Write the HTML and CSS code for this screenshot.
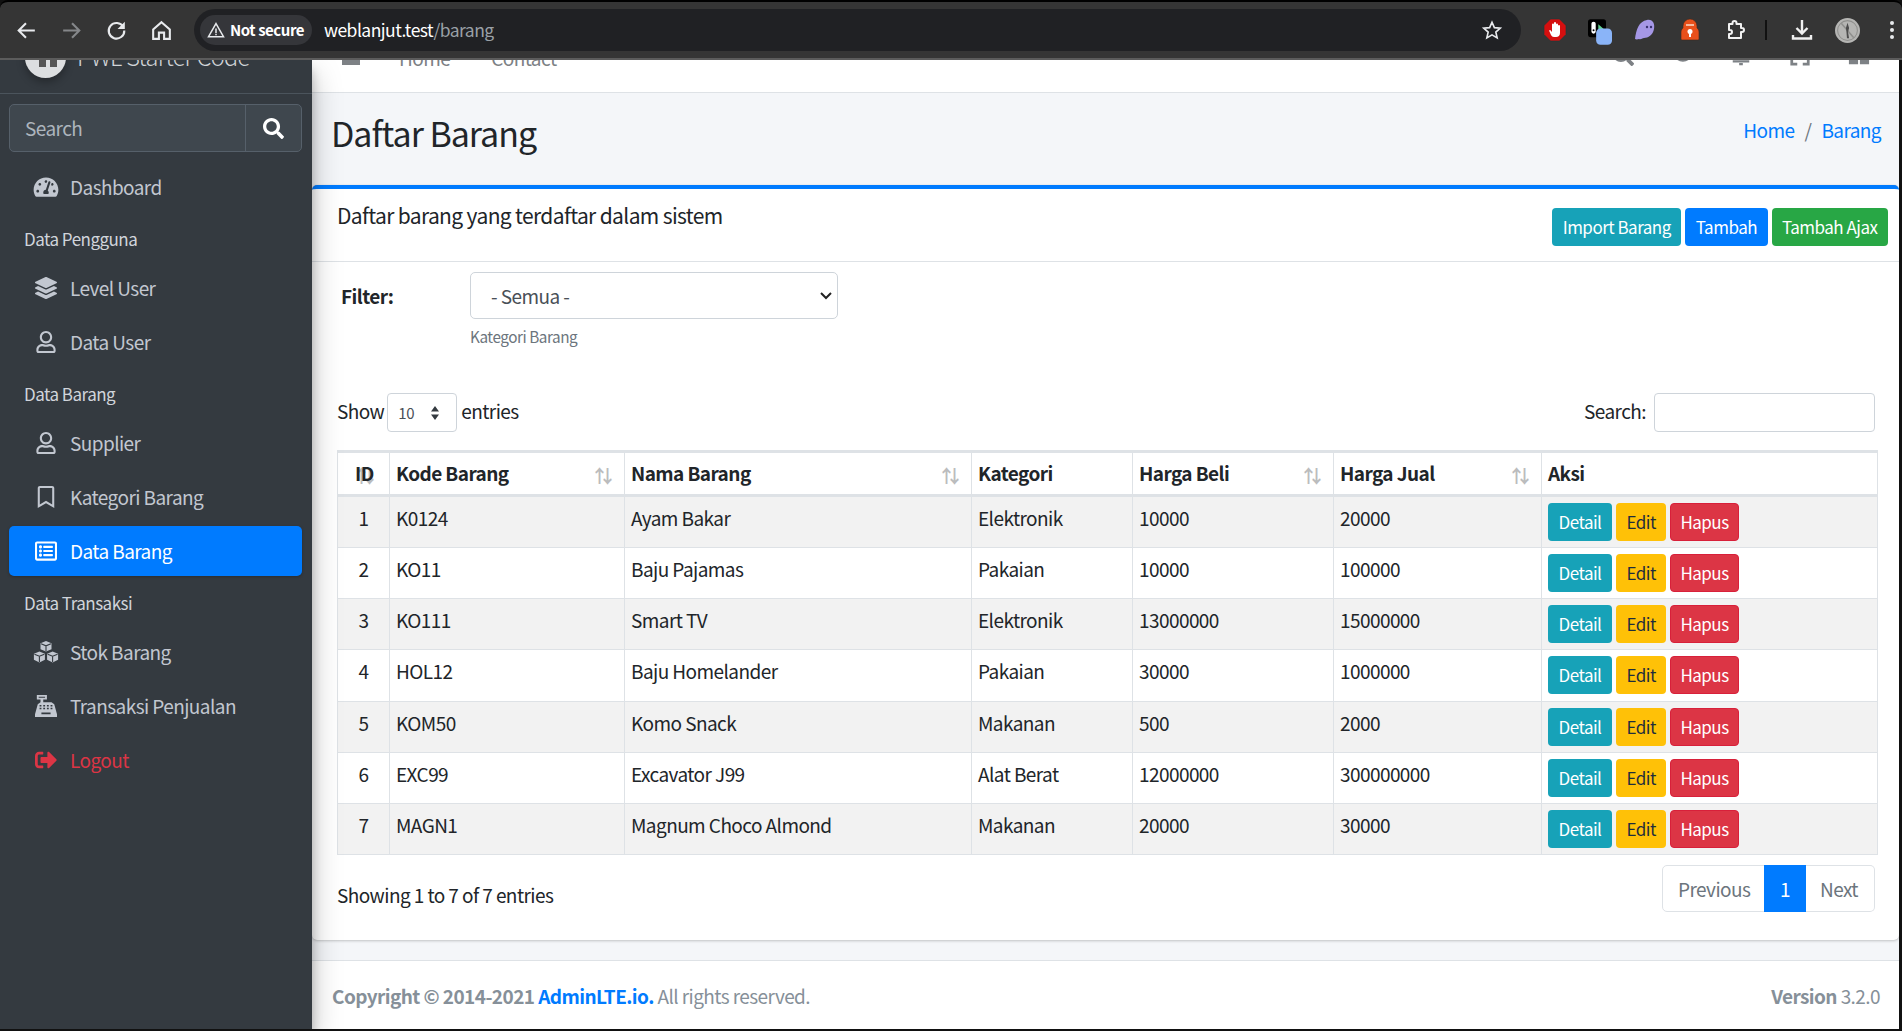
FILE: index.html
```html
<!DOCTYPE html>
<html lang="id">

<head>
    <meta charset="UTF-8">
    <title>Daftar Barang</title>
    <link rel="stylesheet" href="styles.css">
</head>

<body>
    <svg class="defs" width="0" height="0">
        <symbol id="i-user" viewBox="0 0 448 512"><path d="M313.6 304c-28.7 0-42.5 16-89.6 16-47.1 0-60.8-16-89.6-16C60.2 304 0 364.2 0 438.4V464c0 26.5 21.5 48 48 48h352c26.5 0 48-21.5 48-48v-25.6c0-74.2-60.2-134.4-134.4-134.4zM400 464H48v-25.6c0-47.6 38.8-86.4 86.4-86.4 14.6 0 38.3 16 89.6 16 51.7 0 74.9-16 89.6-16 47.6 0 86.4 38.8 86.4 86.4V464zM224 288c79.5 0 144-64.5 144-144S303.5 0 224 0 80 64.5 80 144s64.5 144 144 144zm0-240c52.9 0 96 43.1 96 96s-43.1 96-96 96-96-43.1-96-96 43.1-96 96-96z"/></symbol>
        <symbol id="i-search" viewBox="0 0 512 512"><path d="M505 442.7L405.3 343c-4.5-4.5-10.6-7-17-7H372c27.6-35.3 44-79.7 44-128C416 93.1 322.9 0 208 0S0 93.1 0 208s93.1 208 208 208c48.3 0 92.7-16.4 128-44v16.3c0 6.4 2.5 12.5 7 17l99.7 99.7c9.4 9.4 24.6 9.4 33.9 0l28.3-28.3c9.4-9.4 9.4-24.6.1-34zM208 336c-70.7 0-128-57.2-128-128 0-70.7 57.2-128 128-128 70.7 0 128 57.2 128 128 0 70.7-57.2 128-128 128z"/></symbol>
    </svg>

    <div class="window">
        <!-- browser toolbar -->
        <header class="chrome">
            <div class="chrome-nav">
                <svg class="cicon" viewBox="0 0 24 24"><path d="M20 12H5M11.5 5l-7 7 7 7" fill="none" stroke="#e8eaed" stroke-width="2"/></svg>
                <svg class="cicon" viewBox="0 0 24 24"><path d="M4 12h15M12.5 5l7 7-7 7" fill="none" stroke="#85878a" stroke-width="2"/></svg>
                <svg class="cicon" viewBox="0 0 24 24"><path d="M18.5 8.5A7.5 7.5 0 1 0 19.5 12" fill="none" stroke="#e8eaed" stroke-width="2"/><path d="M20 3.5v7h-7z" fill="#e8eaed"/></svg>
                <svg class="cicon" viewBox="0 0 24 24"><path d="M12 4l8 7v9h-5.500v-6h-5v6H4v-9z" fill="none" stroke="#e8eaed" stroke-width="2"/></svg>
            </div>
            <div class="omnibox">
                <div class="chip">
                    <svg class="chip-icon" viewBox="0 0 24 24"><path d="M12 3.500L22 21H2z" fill="none" stroke="#e8eaed" stroke-width="2"/><path d="M11 10h2v6h-2zM11 17h2v2h-2z" fill="#e8eaed"/></svg>
                    <span>Not secure</span>
                </div>
                <div class="url">weblanjut.test<span class="url-path">/barang</span></div>
                <svg class="star" viewBox="0 0 24 24"><path d="M12 3.500l2.600 5.900 6.400.6-4.800 4.300 1.400 6.300-5.600-3.300-5.600 3.300 1.400-6.300L3 10l6.400-.6z" fill="none" stroke="#e8eaed" stroke-width="1.800"/></svg>
            </div>
            <div class="chrome-ext">
                <svg class="ext" viewBox="0 0 24 24"><path d="M7.500 1h9L23 7.500v9L16.500 23h-9L1 16.500v-9z" fill="#d50f0f" stroke="#143c3c" stroke-width=".6"/><path d="M8 17l-2-4.500 1.200-.6L9 14V6.500a1 1 0 0 1 2 0V5a1 1 0 0 1 2 0v1.500a1 1 0 0 1 2 0V8a1 1 0 0 1 2 0v7c0 2.500-1.500 4-4 4h-2c-1.500 0-2.300-.7-3-2z" fill="#fff"/></svg>
                <svg class="ext ext-tall" viewBox="0 0 28 30"><rect width="21" height="21" rx="3" fill="#000"/><rect x="4" y="3" width="5" height="14" rx="2.500" fill="#fff"/><circle cx="6.500" cy="13" r="1.200" fill="#000"/><path d="M12 6l7 6h-7z" fill="#5fd38d"/><rect x="9.500" y="11" width="18.500" height="19" rx="5" fill="#8ab4f8"/></svg>
                <svg class="ext" viewBox="0 0 24 24"><path d="M2 21c1-9 4-18 12-19 6-1 8 4 7 9-1 6-6 9-10 9-2 0-3 2-5 1-1 0-2 1-4 0z" fill="#a597e6"/><circle cx="14" cy="9" r="1.200" fill="#3a3170"/><circle cx="18" cy="9" r="1.200" fill="#3a3170"/></svg>
                <svg class="ext" viewBox="0 0 24 24"><path d="M3 21v-7c0-2 1-3 2-4V8a7 7 0 0 1 14 0v2c1 1 2 2 2 4v7a1 1 0 0 1-1 1H4a1 1 0 0 1-1-1z" fill="#e8501b" stroke="#3c2a20" stroke-width=".6"/><path d="M8 6h8v2H8z" fill="#f4b9a0"/><circle cx="12" cy="13.500" r="2.500" fill="#fff"/><path d="M11 14h2v5h-2z" fill="#fff"/></svg>
                <svg class="ext" viewBox="0 0 24 24"><path d="M6 6h3.500V5a2 2 0 0 1 4 0v1H18v4h1a2 2 0 0 1 0 4h-1v6H6v-4h1a2 2 0 0 0 0-4H6z" fill="none" stroke="#f1f1f1" stroke-width="2" stroke-linejoin="round"/></svg>
                <span class="sep"></span>
                <svg class="ext" viewBox="0 0 24 24"><path d="M12 2v13M6.500 10l5.500 5.500 5.500-5.500" fill="none" stroke="#f1f1f1" stroke-width="2.400"/><path d="M3 17v3.500h18V17" fill="none" stroke="#f1f1f1" stroke-width="2.400"/></svg>
                <svg class="avatar" viewBox="0 0 24 24"><circle cx="12" cy="12" r="12" fill="#b5b5b3"/><circle cx="12" cy="12" r="9.500" fill="none" stroke="#8f8f8d"/><path d="M6 5l12 14" stroke="#8f8f8d" stroke-width="1.500"/><path d="M12 4.500l1.500 5-1 4 1 6h-2l-.5-6-.5-4z" fill="#4c4c4c"/></svg>
                <span class="dots"><i></i><i></i><i></i></span>
            </div>
        </header>

        <div class="app">
            <aside class="sidebar">
                <div class="brand">
                    <span class="brand-logo"></span>
                    <span class="brand-text">PWL Starter Code</span>
                </div>
                <div class="side-search">
                    <span class="side-search-input">Search</span>
                    <span class="side-search-btn"><svg class="icon-search"><use href="#i-search"/></svg></span>
                </div>
                <nav class="menu">
                    <a class="item">
                        <svg class="mi" viewBox="0 0 576 512"><path d="M288 32C128.940 32 0 160.940 0 320c0 52.800 14.250 102.260 39.060 144.800 5.610 9.620 16.300 15.200 27.440 15.200h443c11.140 0 21.830-5.580 27.440-15.200C561.750 422.260 576 372.800 576 320c0-159.060-128.940-288-288-288zm0 64c14.710 0 26.580 10.130 30.320 23.650-1.110 2.260-2.640 4.230-3.450 6.670l-9.220 27.670c-5.130 3.490-10.970 6.010-17.640 6.010-17.670 0-32-14.330-32-32S270.330 96 288 96zM96 384c-17.670 0-32-14.330-32-32s14.330-32 32-32 32 14.330 32 32-14.330 32-32 32zm48-160c-17.670 0-32-14.330-32-32s14.330-32 32-32 32 14.330 32 32-14.330 32-32 32zm246.770-72.410l-61.330 184C343.130 347.330 352 364.540 352 384c0 11.720-3.380 22.550-8.880 32H232.880c-5.500-9.450-8.880-20.280-8.880-32 0-33.940 26.500-61.430 59.900-63.590l61.340-184.010c4.170-12.560 17.730-19.450 30.360-15.170 12.570 4.190 19.350 17.790 15.170 30.360zm14.660 57.200l15.520-46.550c3.470-1.290 7.130-2.230 11.050-2.230 17.670 0 32 14.330 32 32s-14.330 32-32 32c-11.380-.01-20.890-6.280-26.570-15.220zM480 384c-17.670 0-32-14.330-32-32s14.330-32 32-32 32 14.330 32 32-14.330 32-32 32z"/></svg>
                        Dashboard
                    </a>
                    <div class="menu-head">Data Pengguna</div>
                    <a class="item">
                        <svg class="mi" viewBox="0 0 512 512"><path d="M12.410 148.020l232.940 105.670c6.800 3.090 14.490 3.090 21.290 0l232.940-105.670c16.550-7.510 16.550-32.520 0-40.030L266.650 2.310a25.607 25.607 0 0 0-21.290 0L12.410 107.980c-16.550 7.510-16.550 32.530 0 40.040zm487.180 88.280l-58.090-26.330-161.640 73.270c-7.560 3.430-15.590 5.170-23.860 5.170s-16.290-1.740-23.860-5.170L70.510 209.970l-58.100 26.330c-16.550 7.500-16.550 32.500 0 40l232.940 105.590c6.800 3.080 14.490 3.080 21.290 0L499.590 276.300c16.550-7.500 16.550-32.500 0-40zm0 127.800l-57.870-26.230-161.860 73.370c-7.560 3.430-15.590 5.170-23.860 5.170s-16.290-1.740-23.860-5.170L70.290 337.870 12.410 364.100c-16.550 7.500-16.550 32.500 0 40l232.940 105.590c6.800 3.080 14.490 3.080 21.290 0L499.590 404.100c16.550-7.500 16.550-32.500 0-40z"/></svg>
                        Level User
                    </a>
                    <a class="item"><svg class="mi"><use href="#i-user"/></svg>Data User</a>
                    <div class="menu-head">Data Barang</div>
                    <a class="item"><svg class="mi"><use href="#i-user"/></svg>Supplier</a>
                    <a class="item">
                        <svg class="mi" viewBox="0 0 384 512"><path d="M336 0H48C21.490 0 0 21.490 0 48v464l192-112 192 112V48c0-26.510-21.490-48-48-48zm0 428.430l-144-84-144 84V54a6 6 0 0 1 6-6h276c3.314 0 6 2.683 6 5.996V428.430z"/></svg>
                        Kategori Barang
                    </a>
                    <a class="item active">
                        <svg class="mi" viewBox="0 0 512 512"><path d="M464 32H48C21.490 32 0 53.490 0 80v352c0 26.510 21.490 48 48 48h416c26.510 0 48-21.490 48-48V80c0-26.510-21.490-48-48-48zm-6 400H54a6 6 0 0 1-6-6V86a6 6 0 0 1 6-6h404a6 6 0 0 1 6 6v340a6 6 0 0 1-6 6zm-42-92v24c0 6.627-5.373 12-12 12H204c-6.627 0-12-5.373-12-12v-24c0-6.627 5.373-12 12-12h200c6.627 0 12 5.373 12 12zm0-96v24c0 6.627-5.373 12-12 12H204c-6.627 0-12-5.373-12-12v-24c0-6.627 5.373-12 12-12h200c6.627 0 12 5.373 12 12zm0-96v24c0 6.627-5.373 12-12 12H204c-6.627 0-12-5.373-12-12v-24c0-6.627 5.373-12 12-12h200c6.627 0 12 5.373 12 12zm-252 12c0 19.882-16.118 36-36 36s-36-16.118-36-36 16.118-36 36-36 36 16.118 36 36zm0 96c0 19.882-16.118 36-36 36s-36-16.118-36-36 16.118-36 36-36 36 16.118 36 36zm0 96c0 19.882-16.118 36-36 36s-36-16.118-36-36 16.118-36 36-36 36 16.118 36 36z"/></svg>
                        Data Barang
                    </a>
                    <div class="menu-head">Data Transaksi</div>
                    <a class="item">
                        <svg class="mi" viewBox="1 0 22 20"><path d="M12 0l5 2v5.500l-5 2-5-2V2zM6 9.500l5 2V17l-5 2.500L1 17v-5.500zM18 9.500l5 2V17l-5 2.500-5-2.500v-5.500z"/><path d="M7.500 2.600L12 4.400l4.500-1.800M1.500 12l4.500 1.800 4.500-1.800M13.500 12l4.500 1.800 4.500-1.800M12 4.400v4.800M6 13.800v5.400M18 13.800v5.400" fill="none" stroke="#343a40" stroke-width="1"/></svg>
                        Stok Barang
                    </a>
                    <a class="item">
                        <svg class="mi" viewBox="0 0 24 24"><path d="M2 0h11v5H9v3h9l3 2 3 11v3H0v-3l3-11 3-2V5H2z"/><path d="M4 2h7v1H4zM5 11h2v1.500H5zM9 11h2v1.500H9zM13 11h2v1.500h-2zM17 11h2v1.500h-2zM5 14h2v1.500H5zM9 14h2v1.500H9zM13 14h2v1.500h-2zM17 14h2v1.500h-2zM7 19h10v2H7z" fill="#343a40"/></svg>
                        Transaksi Penjualan
                    </a>
                    <a class="item logout">
                        <svg class="mi" viewBox="0 0 512 512"><path d="M497 273L329 441c-15 15-41 4.500-41-17v-96H152c-13.300 0-24-10.700-24-24v-96c0-13.300 10.700-24 24-24h136V88c0-21.400 25.900-32 41-17l168 168c9.300 9.400 9.300 24.600 0 34zM192 436v-40c0-6.600-5.400-12-12-12H96c-17.700 0-32-14.300-32-32V160c0-17.700 14.300-32 32-32h84c6.600 0 12-5.400 12-12V76c0-6.600-5.400-12-12-12H96c-53 0-96 43-96 96v192c0 53 43 96 96 96h84c6.600 0 12-5.400 12-12z"/></svg>
                        Logout
                    </a>
                </nav>
            </aside>

            <div class="main">
                <div class="navbar">
                    <div class="nav-left">
                        <span class="burger"></span>
                        <span class="nav-link">Home</span>
                        <span class="nav-link">Contact</span>
                    </div>
                    <div class="nav-right">
                        <svg class="nav-icon"><use href="#i-search"/></svg>
                        <svg class="nav-icon" viewBox="0 0 24 24"><ellipse cx="13" cy="10" rx="9" ry="8" fill="none" stroke="#7d8185" stroke-width="2.500"/></svg>
                        <svg class="nav-icon" viewBox="0 0 24 24"><path d="M3 19h18M10 22h4" stroke="#7d8185" stroke-width="2.500"/></svg>
                        <svg class="nav-icon" viewBox="0 0 24 24"><path d="M3 16v6h6M21 16v6h-6" fill="none" stroke="#7d8185" stroke-width="3"/></svg>
                        <svg class="nav-icon" viewBox="0 0 24 24"><path d="M1 12h10v10H1zM13 12h10v10H13z" fill="#7d8185"/></svg>
                    </div>
                </div>

                <section class="content-header">
                    <h1>Daftar Barang</h1>
                    <div class="crumbs"><a>Home</a><span class="crumb-sep">/</span><a>Barang</a></div>
                </section>

                <section class="card">
                    <div class="card-header">
                        <h3>Daftar barang yang terdaftar dalam sistem</h3>
                        <div class="card-tools">
                            <a class="btn btn-info">Import Barang</a>
                            <a class="btn btn-primary">Tambah</a>
                            <a class="btn btn-success">Tambah Ajax</a>
                        </div>
                    </div>
                    <div class="card-body">
                        <div class="filter">
                            <label class="filter-label">Filter:</label>
                            <div class="filter-field">
                                <select class="filter-select">
                                    <option>- Semua -</option>
                                </select>
                                <small>Kategori Barang</small>
                            </div>
                        </div>

                        <div class="dt-top">
                            <div class="dt-length">
                                Show
                                <select class="length-select"><option>10</option></select>
                                entries
                            </div>
                            <div class="dt-search">
                                Search:
                                <input class="search-input" type="search">
                            </div>
                        </div>

                        <table class="data">
                            <colgroup>
                                <col class="c-id"><col class="c-kode"><col class="c-nama"><col class="c-kat"><col class="c-beli"><col class="c-jual"><col class="c-aksi">
                            </colgroup>
                            <thead>
                                <tr>
                                    <th class="sort th-id">ID</th>
                                    <th class="sort">Kode Barang</th>
                                    <th class="sort">Nama Barang</th>
                                    <th>Kategori</th>
                                    <th class="sort">Harga Beli</th>
                                    <th class="sort">Harga Jual</th>
                                    <th>Aksi</th>
                                </tr>
                            </thead>
                            <tbody>
                                <tr>
                                    <td class="center">1</td><td>K0124</td><td>Ayam Bakar</td><td>Elektronik</td><td>10000</td><td>20000</td>
                                    <td><div class="acts"><a class="btn btn-info">Detail</a><a class="btn btn-warning">Edit</a><a class="btn btn-danger">Hapus</a></div></td>
                                </tr>
                                <tr>
                                    <td class="center">2</td><td>KO11</td><td>Baju Pajamas</td><td>Pakaian</td><td>10000</td><td>100000</td>
                                    <td><div class="acts"><a class="btn btn-info">Detail</a><a class="btn btn-warning">Edit</a><a class="btn btn-danger">Hapus</a></div></td>
                                </tr>
                                <tr>
                                    <td class="center">3</td><td>KO111</td><td>Smart TV</td><td>Elektronik</td><td>13000000</td><td>15000000</td>
                                    <td><div class="acts"><a class="btn btn-info">Detail</a><a class="btn btn-warning">Edit</a><a class="btn btn-danger">Hapus</a></div></td>
                                </tr>
                                <tr>
                                    <td class="center">4</td><td>HOL12</td><td>Baju Homelander</td><td>Pakaian</td><td>30000</td><td>1000000</td>
                                    <td><div class="acts"><a class="btn btn-info">Detail</a><a class="btn btn-warning">Edit</a><a class="btn btn-danger">Hapus</a></div></td>
                                </tr>
                                <tr>
                                    <td class="center">5</td><td>KOM50</td><td>Komo Snack</td><td>Makanan</td><td>500</td><td>2000</td>
                                    <td><div class="acts"><a class="btn btn-info">Detail</a><a class="btn btn-warning">Edit</a><a class="btn btn-danger">Hapus</a></div></td>
                                </tr>
                                <tr>
                                    <td class="center">6</td><td>EXC99</td><td>Excavator J99</td><td>Alat Berat</td><td>12000000</td><td>300000000</td>
                                    <td><div class="acts"><a class="btn btn-info">Detail</a><a class="btn btn-warning">Edit</a><a class="btn btn-danger">Hapus</a></div></td>
                                </tr>
                                <tr>
                                    <td class="center">7</td><td>MAGN1</td><td>Magnum Choco Almond</td><td>Makanan</td><td>20000</td><td>30000</td>
                                    <td><div class="acts"><a class="btn btn-info">Detail</a><a class="btn btn-warning">Edit</a><a class="btn btn-danger">Hapus</a></div></td>
                                </tr>
                            </tbody>
                        </table>

                        <div class="dt-bottom">
                            <div class="dt-info">Showing 1 to 7 of 7 entries</div>
                            <div class="pager">
                                <a class="page-prev">Previous</a>
                                <a class="page-cur">1</a>
                                <a class="page-next">Next</a>
                            </div>
                        </div>
                    </div>
                </section>

                <div class="spacer"></div>

                <footer class="footer">
                    <div><strong>Copyright © 2014-2021 <a>AdminLTE.io.</a></strong> All rights reserved.</div>
                    <div><strong>Version</strong> 3.2.0</div>
                </footer>
            </div>
        </div>
    </div>
</body>

</html>
```

FILE: styles.css
```css
* {
    box-sizing: border-box;
    letter-spacing: -0.03em;
}

html,
body {
    margin: 0;
    height: 100%;
    overflow: hidden;
}

body {
    font-family: "Noto Sans CJK JP", "Noto Sans", sans-serif;
    font-size: 19px;
    line-height: 30px;
    color: #212529;
    background: #111;
}

.defs {
    display: block;
    height: 0;
}

.window {
    display: flex;
    flex-direction: column;
    height: 1031px;
    padding-bottom: 2px;
}

/* browser toolbar */
.chrome {
    display: flex;
    align-items: center;
    flex: none;
    height: 60px;
    border-top: 2px solid #000;
    border-bottom: 2px solid #5c5c5c;
    border-radius: 8px 8px 0 0;
    background: #353535;
}

.chrome-nav {
    display: flex;
    align-items: center;
    gap: 20px;
    width: 194px;
    padding-left: 14px;
}

.cicon {
    width: 25px;
    height: 25px;
}

.omnibox {
    display: flex;
    align-items: center;
    width: 1327px;
    height: 42px;
    padding: 0 18px 0 6px;
    border-radius: 21px;
    background: #202124;
}

.chip {
    display: flex;
    align-items: center;
    gap: 5px;
    width: 112px;
    height: 30px;
    padding-left: 7px;
    border-radius: 15px;
    background: #35363a;
    color: #fff;
    font-size: 15px;
    font-weight: 700;
    white-space: nowrap;
}

.chip-icon {
    flex: none;
    width: 18px;
    height: 18px;
}

.url {
    flex: 1;
    margin-left: 12px;
    color: #fff;
    font-size: 17.5px;
}

.url-path {
    color: #9aa0a6;
}

.star {
    width: 22px;
    height: 22px;
}

.chrome-ext {
    display: flex;
    align-items: center;
    flex: 1;
    gap: 21px;
    padding-left: 22px;
}

.ext {
    flex: none;
    width: 24px;
    height: 24px;
}

.ext-tall {
    height: 28px;
    margin-top: 4px;
}

.sep {
    flex: none;
    width: 2px;
    height: 20px;
    margin: 0 2px 0 -3px;
    background: #111;
}

.avatar {
    flex: none;
    width: 25px;
    height: 25px;
}

.dots {
    display: flex;
    flex-direction: column;
    gap: 3px;
    margin-left: 9px;
}

.dots i {
    display: block;
    width: 4px;
    height: 4px;
    border-radius: 50%;
    background: #e8eaed;
}

/* page */
.app {
    display: flex;
    flex: 1;
    min-height: 0;
    margin-right: 3px;
    overflow: hidden;
}

.sidebar {
    position: relative;
    z-index: 2;
    flex: none;
    width: 312px;
    background: #343a40;
    box-shadow: 0 14px 28px rgba(0, 0, 0, .25), 0 10px 10px rgba(0, 0, 0, .22);
}

.brand {
    display: flex;
    align-items: flex-end;
    gap: 11px;
    height: 34px;
    padding-left: 25px;
    border-bottom: 1px solid #4b545c;
    overflow: hidden;
}

.brand-logo {
    position: relative;
    flex: none;
    width: 41px;
    height: 41px;
    margin-bottom: 15px;
    border-radius: 50%;
    background: #dcdee0;
    box-shadow: 0 4px 8px rgba(0, 0, 0, .3);
}

/* the two dark bars of the logo, mostly hidden under the toolbar */
.brand-logo::before {
    position: absolute;
    bottom: 11px;
    left: 14px;
    width: 7px;
    height: 14px;
    background: #555;
    box-shadow: 11px 0 0 #555;
    content: "";
}

.brand-text {
    margin-bottom: 22px;
    color: #d0d3d7;
    font-size: 23.5px;
    font-weight: 300;
    white-space: nowrap;
}

.side-search {
    display: flex;
    height: 48px;
    margin: 10px 10px 0 9px;
    border: 1px solid #56606a;
    border-radius: 5px;
    background: #3f474e;
}

.side-search-input {
    flex: 1;
    padding: 8px 0 0 15px;
    color: #adb5bd;
}

.side-search-btn {
    display: flex;
    align-items: center;
    justify-content: center;
    width: 56px;
    border-left: 1px solid #56606a;
}

.icon-search {
    width: 21px;
    height: 21px;
    fill: #fff;
}

.menu {
    display: flex;
    flex-direction: column;
    gap: 4px;
    margin: 10px 10px 0 9px;
}

.item {
    display: flex;
    align-items: center;
    height: 50px;
    padding: 0 0 1px 61px;
    position: relative;
    border-radius: 5px;
    color: #c2c7d0;
    white-space: nowrap;
}

.item .mi {
    position: absolute;
    top: 14px;
    left: 24px;
    width: 26px;
    height: 22px;
    fill: #c2c7d0;
}

.item.active {
    background: #007bff;
    color: #fff;
    box-shadow: 0 1px 3px rgba(0, 0, 0, .24);
}

.item.active .mi {
    fill: #fff;
}

.item.logout {
    color: #dc3545;
}

.item.logout .mi {
    fill: #dc3545;
}

.menu-head {
    height: 43px;
    padding: 10px 0 0 15px;
    color: #d0d4db;
    font-size: 17px;
    line-height: 26px;
}

.main {
    display: flex;
    flex: 1;
    flex-direction: column;
    min-width: 0;
    background: #f4f6f9;
}

.navbar {
    display: flex;
    align-items: flex-end;
    justify-content: space-between;
    flex: none;
    height: 33px;
    border-bottom: 1px solid #dee2e6;
    background: #fff;
    overflow: hidden;
}

.nav-left {
    display: flex;
    align-items: flex-end;
    margin-bottom: 19px;
    color: #7d8185;
}

.burger {
    width: 18px;
    height: 5px;
    margin: 0 0 8px 30px;
    background: #7d8185;
}

.nav-link {
    margin-left: 41px;
    line-height: 30px;
}

.burger + .nav-link {
    margin-left: 39px;
}

.nav-right {
    display: flex;
    gap: 37px;
    margin: 0 29px 26px 0;
}

.nav-icon {
    width: 22px;
    height: 22px;
    fill: #7d8185;
}

.content-header {
    display: flex;
    justify-content: space-between;
    flex: none;
    height: 92px;
    padding: 18px 18px 0 19px;
}

.content-header h1 {
    margin: 0;
    font-size: 34px;
    font-weight: 400;
    line-height: 44px;
}

.crumbs {
    margin-top: 4px;
    color: #6c757d;
}

.crumbs a {
    color: #007bff;
}

.crumb-sep {
    padding: 0 10px;
}

.card {
    flex: none;
    border-top: 4px solid #007bff;
    border-radius: 5px;
    background: #fff;
    box-shadow: 0 0 1px rgba(0, 0, 0, .125), 0 1px 3px rgba(0, 0, 0, .2);
}

.card-header {
    display: flex;
    justify-content: space-between;
    height: 73px;
    padding: 11px 11px 0 25px;
    border-bottom: 1px solid #dee2e6;
}

.card-header h3 {
    margin: 0;
    font-size: 21px;
    font-weight: 400;
    line-height: 30px;
}

.card-tools {
    display: flex;
    gap: 4px;
    margin-top: 8px;
}

.btn {
    display: block;
    height: 38px;
    padding: 0 10.5px;
    border-radius: 4px;
    color: #fff;
    font-size: 17px;
    line-height: 37px;
    white-space: nowrap;
}

.btn-info {
    background: #17a2b8;
}

.btn-primary {
    background: #007bff;
}

.btn-success {
    background: #28a745;
}

.btn-warning {
    background: #ffc107;
    color: #1f2d3d;
}

.btn-danger {
    padding: 0 9px;
    border: 1px solid #d8203a;
    background: #dc3545;
    line-height: 35px;
}

.card-body {
    padding: 10px 25px 28px;
}

.filter {
    display: flex;
}

.filter-label {
    width: 133px;
    padding: 9px 0 0 4px;
    font-weight: 700;
}

.filter-field {
    display: flex;
    flex-direction: column;
}

.filter-select {
    width: 368px;
    height: 47px;
    padding: 0 20px;
    border: 1px solid #ced4da;
    border-radius: 5px;
    appearance: none;
    background: #fff url("data:image/svg+xml,%3Csvg xmlns='http://www.w3.org/2000/svg' width='12' height='8'%3E%3Cpath d='M1 1l5 5 5-5' fill='none' stroke='%23222' stroke-width='2'/%3E%3C/svg%3E") no-repeat right 5px center;
    color: #495057;
    font-family: inherit;
    font-size: 19px;
}

.filter-field small {
    margin-top: 7px;
    color: #6c757d;
    font-size: 15.3px;
    line-height: 20px;
}

.dt-top {
    display: flex;
    justify-content: space-between;
    margin: 47px -1px 0 0;
}

.dt-length,
.dt-search {
    display: flex;
    align-items: flex-start;
    height: 39px;
    line-height: 35px;
}

.length-select {
    width: 70px;
    height: 39px;
    margin: 0 4px 0 3px;
    padding: 0 0 0 10px;
    border: 1px solid #ced4da;
    border-radius: 4px;
    appearance: none;
    background: #fff url("data:image/svg+xml,%3Csvg xmlns='http://www.w3.org/2000/svg' width='10' height='14'%3E%3Cpath d='M5 0l4 5.500H1zM5 14l4-5.500H1z' fill='%23343a40'/%3E%3C/svg%3E") no-repeat right 16px center;
    color: #495057;
    font-family: inherit;
    font-size: 15px;
}

.search-input {
    width: 221px;
    height: 39px;
    margin-left: 8px;
    border: 1px solid #ced4da;
    border-radius: 4px;
    background: #fff;
}

table.data {
    width: 1540px;
    margin-top: 18px;
    border-collapse: collapse;
    table-layout: fixed;
}

.c-id { width: 52px; }
.c-kode { width: 235px; }
.c-nama { width: 347px; }
.c-kat { width: 161px; }
.c-beli { width: 201px; }
.c-jual { width: 208px; }
.c-aksi { width: 336px; }

table.data th,
table.data td {
    padding: 6px;
    border: 1px solid #dee2e6;
    vertical-align: top;
}

table.data th {
    position: relative;
    height: 43px;
    padding-top: 5px;
    border-top-width: 3px;
    border-bottom-width: 3px;
    font-weight: 700;
    text-align: left;
}

table.data td {
    height: 51px;
}

table.data tbody tr:nth-child(4) td {
    height: 52px;
}

table.data tbody tr:nth-child(odd) {
    background: #f2f2f2;
}

table.data th.sort::before,
table.data th.sort::after {
    position: absolute;
    top: 7px;
    color: #212529;
    font-size: 18px;
    font-weight: 700;
    opacity: .3;
}

table.data th.sort::before {
    right: 16px;
    content: "↑";
}

table.data th.sort::after {
    right: 8px;
    content: "↓";
}

table.data th.th-id::before {
    right: 19px;
}

table.data th.th-id::after {
    right: 11px;
}

table.data th.th-id {
    padding-left: 17px;
}

.center {
    text-align: center;
}

.acts {
    display: flex;
    gap: 4px;
}

.dt-bottom {
    display: flex;
    justify-content: space-between;
    margin-right: -1px;
}

.dt-info {
    padding-top: 25px;
}

.pager {
    display: flex;
    height: 47px;
    margin-top: 10px;
    color: #6c757d;
    line-height: 45px;
}

.pager a {
    display: block;
    border: 1px solid #dee2e6;
}

.page-prev {
    width: 103px;
    padding-left: 15px;
    border-radius: 5px 0 0 5px;
}

.page-cur {
    width: 42px;
    margin-left: -1px;
    border-color: #007bff !important;
    background: #007bff;
    color: #fff;
    text-align: center;
}

.page-next {
    width: 69px;
    padding-left: 14px;
    border-left: 0 !important;
    border-radius: 0 5px 5px 0;
}

.spacer {
    flex: none;
    height: 20px;
}

.footer {
    display: flex;
    justify-content: space-between;
    flex: 1;
    padding: 20px 19px 0 20px;
    border-top: 1px solid #dee2e6;
    background: #fff;
    color: #869099;
}

.footer a {
    color: #007bff;
}
```
